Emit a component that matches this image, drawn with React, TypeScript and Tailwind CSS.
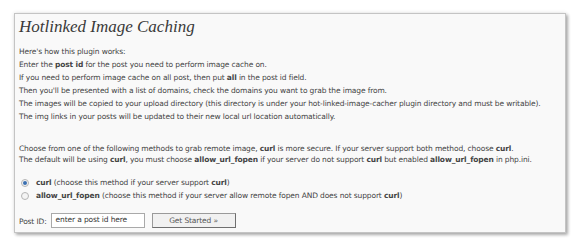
import React from 'react';

const lines = [
  <>Enter the <b>post id</b> for the post you need to perform image cache on.</>,
  <>If you need to perform image cache on all post, then put <b>all</b> in the post id field.</>,
  <>Then you'll be presented with a list of domains, check the domains you want to grab the image from.</>,
  <>The images will be copied to your upload directory (this directory is under your hot-linked-image-cacher plugin directory and must be writable).</>,
  <>The img links in your posts will be updated to their new local url location automatically.</>,
];

function Radio({ checked }: { checked?: boolean }) {
  return (
    <span className="inline-flex w-[8px] h-[8px] rounded-full border border-[#b5b5b5] bg-[#f4f4f4] items-center justify-center mr-[7px]">
      {checked && <span className="w-[4px] h-[4px] rounded-full bg-[#3a6fb0]" />}
    </span>
  );
}

export default function App() {
  return (
    <div className="w-[580px] h-[244px] bg-white pt-[13px] pl-[14px]">
      <div
        className="w-[552px] h-[220px] bg-[#f9f9f9] border border-[#c4c4c4] shadow-[2px_2px_3px_rgba(0,0,0,0.3),0_0_4px_rgba(0,0,0,0.12)] pl-[4px] text-[#444] whitespace-nowrap tracking-[-0.13px]"
        style={{ fontFamily: '"DejaVu Sans", Verdana, sans-serif' }}
      >
        <h1
          className="italic text-[17px] leading-[20px] mt-[3px] text-[#3a3a3a] tracking-normal"
          style={{ fontFamily: 'Georgia, "Liberation Serif", serif' }}
        >
          Hotlinked Image Caching
        </h1>
        <div className="text-[7.5px] leading-[13px] mt-[8px]">
          <p className="mb-[0px]">Here's how this plugin works:</p>
          {lines.map((l, i) => (
            <p key={i}>{l}</p>
          ))}
        </div>
        <div className="text-[7.5px] leading-[11px] mt-[20px]">
          <p>Choose from one of the following methods to grab remote image, <b>curl</b> is more secure. If your server support both method, choose <b>curl</b>.</p>
          <p>The default will be using <b>curl</b>, you must choose <b>allow_url_fopen</b> if your server do not support <b>curl</b> but enabled <b>allow_url_fopen</b> in php.ini.</p>
        </div>
        <div className="text-[7.5px] leading-[13px] mt-[11px] pl-[2px]">
          <div className="flex items-center">
            <Radio checked />
            <span><b>curl</b> (choose this method if your server support <b>curl</b>)</span>
          </div>
          <div className="flex items-center">
            <Radio />
            <span><b>allow_url_fopen</b> (choose this method if your server allow remote fopen AND does not support <b>curl</b>)</span>
          </div>
        </div>
        <div className="flex items-end mt-[11px] text-[7.5px]">
          <span className="mr-[4px] mb-[1px]">Post ID:</span>
          <div className="w-[94px] h-[15px] bg-white border border-[#a9a9a9] pl-[4px] leading-[12px] text-[#333]">
            enter a post id here
          </div>
          <div className="w-[84px] h-[15px] ml-[7px] bg-[#f1f1f1] border border-[#9a9a9a] border-r-[#6f6f6f] border-b-[#6f6f6f] flex items-center justify-center text-[#555]">
            Get Started »
          </div>
        </div>
      </div>
    </div>
  );
}
